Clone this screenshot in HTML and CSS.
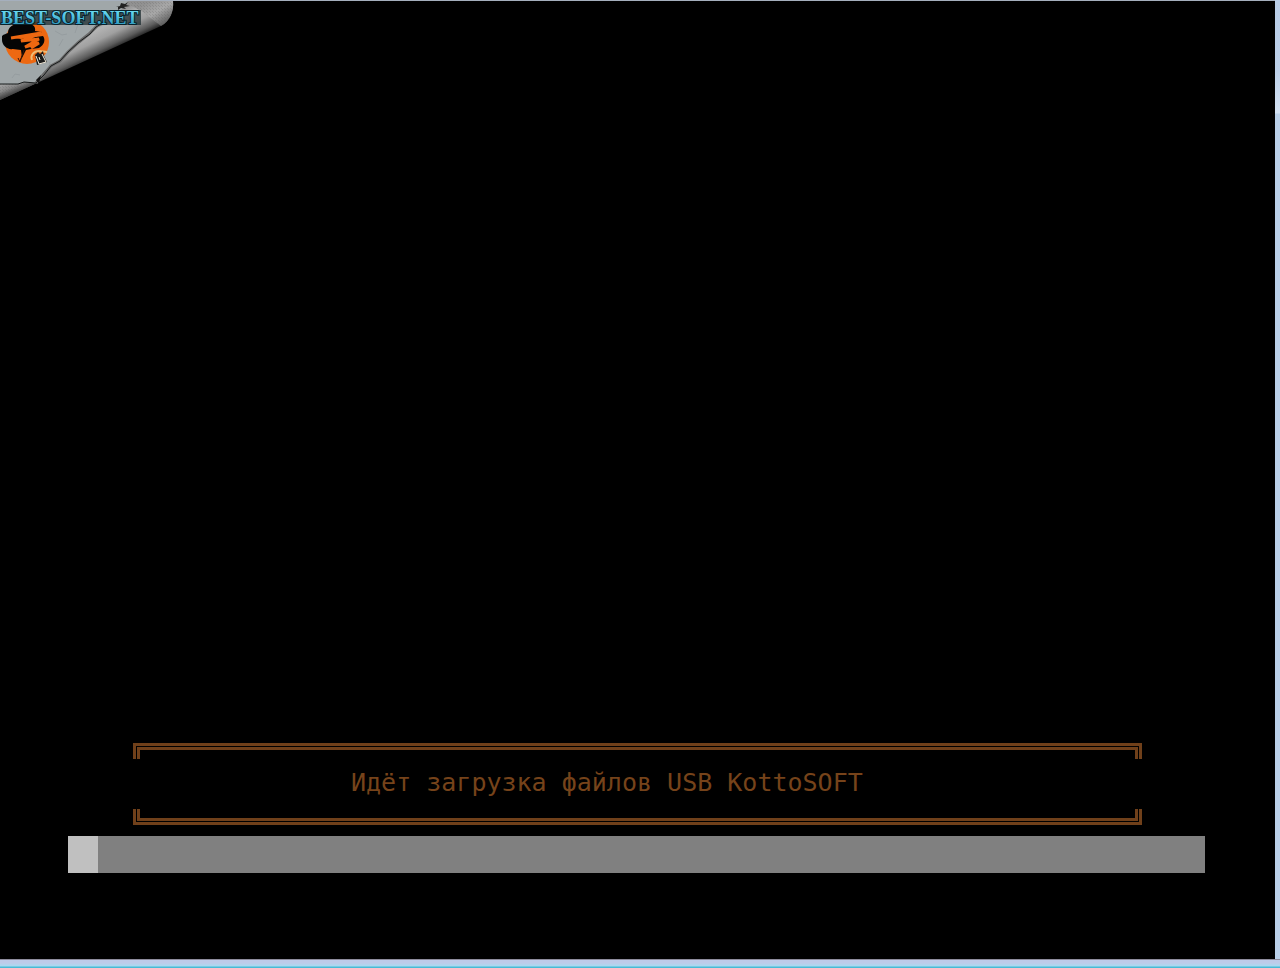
FILE: index.html
```html
<!DOCTYPE html>
<html lang="ru">
<head>
    <meta charset="UTF-8">
    <meta name="viewport" content="width=device-width, initial-scale=1.0">
    <title>USB KottoSOFT</title>
    <link rel="stylesheet" href="styles.css">
</head>
<body>
    <main class="screen">
        <svg class="corner" width="176" height="102" viewBox="0 1 176 102">
            <defs>
                <linearGradient id="curl" gradientUnits="userSpaceOnUse" x1="82" y1="22" x2="99" y2="57">
                    <stop offset="0" stop-color="#777"/>
                    <stop offset="0.35" stop-color="#b4b4b4"/>
                    <stop offset="0.6" stop-color="#a0a0a0"/>
                    <stop offset="0.85" stop-color="#5c5c5c"/>
                    <stop offset="1" stop-color="#1c1c1c"/>
                </linearGradient>
                <linearGradient id="tail" gradientUnits="userSpaceOnUse" x1="8" y1="80" x2="14" y2="95">
                    <stop offset="0" stop-color="#aaa"/>
                    <stop offset="0.5" stop-color="#888"/>
                    <stop offset="1" stop-color="#333"/>
                </linearGradient>
                <linearGradient id="tip" gradientUnits="userSpaceOnUse" x1="146" y1="3" x2="163" y2="31">
                    <stop offset="0" stop-color="#919191"/>
                    <stop offset="0.4" stop-color="#a8a8a8"/>
                    <stop offset="1" stop-color="#444"/>
                </linearGradient>
                <linearGradient id="letters" x1="0" y1="0" x2="0" y2="1">
                    <stop offset="0.2" stop-color="#65d5ee"/>
                    <stop offset="0.8" stop-color="#359fc4"/>
                </linearGradient>
                <pattern id="dots" width="3" height="3" patternUnits="userSpaceOnUse">
                    <path d="M0 0h1v1H0zM2 2h1v1H2z" fill="#555" opacity="0.2"/>
                </pattern>
            </defs>
            <!-- curled sheet -->
            <path d="M0 1h173c1 10-3 20-12 25L37 83 0 100z" fill="url(#curl)"/>
            <path d="M123 1h50c1 10-3 20-12 25l-18-14z" fill="url(#tip)"/>
            <path d="M123 1h50c1 10-3 20-12 25l-18-14z" fill="url(#dots)"/>
            <path d="M0 83h37L0 100z" fill="url(#tail)"/>
            <path d="M0 83h37L0 100z" fill="url(#dots)"/>
            <!-- torn stone -->
            <path d="M0 1h128l-5 7-18 14-8 4-8 8-10 8-11 10-8 9-9 5-8 9-7 8-12-1-6 2H0z" fill="#a0a7a9"/>
            <path d="M12 78l3-4 5 1M55 31l7 4 5-1M63 39l-4 7M48 70l2-8M78 24l-3 9" fill="none" stroke="#969da0"/>
            <path d="M105 22l-8 4-8 8-10 8-11 10-8 9-9 5-8 9-7 8" fill="none" stroke="#6a6a6a" stroke-width="3"/>
            <path d="M101 24l-5 3-6 7-11 8-11 10-8 9-9 5-7 9-8 8-12-1-6 2H0" fill="none" stroke="#191c1c" stroke-width="1"/>
            <path d="M36 80l14-14-9 9-2 9z" fill="#111"/>
            <path d="M116 7l4-1 1-3 4 1 3-2-2 3 4 1-6 1 2 2-5-1-3 2 0-3z" fill="#222"/>
            <!-- badge -->
            <circle cx="27" cy="42" r="22" fill="#ed6811"/>
            <path d="M2 36c2-2 4-2 6-3 0-6 5-9 11-9h10c4 0 7 3 6 7l7 1-15 3-13 3 7 1 22-3c3 4 1 9-4 12l-8 1-5 1-4 8-1-8-8-1c-6 1-11-4-11-9z" fill="#050505"/>
            <path d="M11 38l30-5-20 8 18-2-14 8 14-4-8 5" fill="none" stroke="#ed6811" stroke-width="3"/>
            <path d="M24 50l-4 12-2-4M20 61l2-5" fill="none" stroke="#351407"/>
            <path d="M32 60c-2-5 2-9 7-9l8 1" fill="none" stroke="#eebd77" stroke-width="2"/>
            <path d="M35 55l3-3 2 2 3-3 1 5 3 6-10 3z" fill="#1a1a19"/>
            <path d="M36 56l3 8 7-2-4-8M39 57l1 3" fill="none" stroke="#f5eddd" stroke-width="1"/>
            <path d="M0 10h141v15H0z" fill="#17272b" opacity="0.7"/>
            <text class="brand" x="1" y="24">BEST-SOFT.NET</text>
        </svg>
        <div class="loader">
            <div class="message">
                <div class="rule rule-top"></div>
                <label class="status" for="progress">Идёт загрузка файлов USB KottoSOFT</label>
                <div class="rule rule-bottom"></div>
            </div>
            <progress class="bar" id="progress" value="264" max="10000"></progress>
        </div>
    </main>
</body>
</html>
```
FILE: styles.css
```css
* {
    box-sizing: border-box;
}
body {
    margin: 0;
    min-height: 100vh;
    display: flex;
    padding: 0 5px 9px 0;
    background:
        linear-gradient(#8d8b9c 0 1px, #bdcbe9 1px 4px, #a9daf1 7px, #48bad5 8px 9px) bottom / 100% 9px no-repeat,
        linear-gradient(#b9cde7, #bdd0e9 70px, #d4e2f3 113px, #bad0e9 114px);
}
.screen {
    flex: 1;
    display: flex;
    flex-direction: column;
    justify-content: space-between;
    background: #000;
    border-top: 1px solid #a5afbd;
}
.corner {
    display: block;
}
.brand {
    font-family: "Liberation Serif", serif;
    font-size: 18px;
    font-weight: bold;
    fill: url(#letters);
    stroke: #08222c;
    stroke-width: 2px;
    paint-order: stroke;
}
.loader {
    padding: 0 70px 86px 68px;
}
.message {
    margin: 0 63px 11px 65px;
}
.rule {
    display: flex;
    height: 16px;
    padding: 1px;
    border: 3px solid #70401a;
}
.rule::before {
    content: "";
    flex: 1;
    border: 3px solid #70401a;
}
.rule-top, .rule-top::before {
    border-bottom: 0;
    padding-bottom: 0;
}
.rule-bottom, .rule-bottom::before {
    border-top: 0;
    padding-top: 0;
}
.status {
    display: block;
    padding: 9px 0 11px 218px;
    font-family: "DejaVu Sans Mono", monospace;
    font-size: 25px;
    line-height: 30px;
    color: #76431a;
    white-space: nowrap;
}
.bar {
    display: block;
    width: 100%;
    height: 37px;
    border: 0;
    appearance: none;
    background: #808080;
}
.bar::-webkit-progress-bar {
    background: #808080;
}
.bar::-webkit-progress-value {
    background: #c0c0c0;
}
.bar::-moz-progress-bar {
    background: #c0c0c0;
}
```
